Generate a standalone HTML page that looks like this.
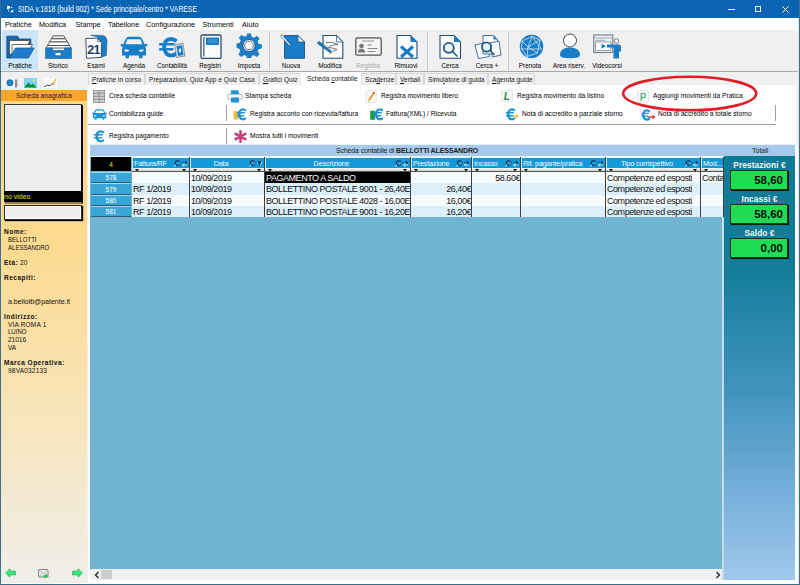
<!DOCTYPE html>
<html><head><meta charset="utf-8">
<style>
*{margin:0;padding:0;box-sizing:border-box}
html,body{width:800px;height:585px;overflow:hidden;background:#f0f0f0;font-family:"Liberation Sans",sans-serif;color:#222}
.a{position:absolute}
.t{position:absolute;white-space:nowrap;line-height:1}
#title{left:0;top:0;width:800px;height:18px;background:#0b63b4}
#menu{left:0;top:18px;width:800px;height:12px;background:#fff}
#tb{left:1px;top:30px;width:797px;height:41px;background:#f0f0f0}
#tbline{left:1px;top:71px;width:797px;height:1px;background:#a9a9a9}
.lbl{position:absolute;top:62px;font-size:7.5px;color:#000;white-space:nowrap;transform:translateX(-50%) scaleX(0.85);line-height:1}
.vsep{position:absolute;width:1px;background:#c5c5c5}
#left{left:1px;top:72px;width:86px;height:511px;background:linear-gradient(#fdd88a 0px,#fdd98c 150px,#f9e2b0 310px,#f4e9d0 420px,#efeeea 511px)}
#lefttop{left:1px;top:72px;width:86px;height:18px;background:#f0f0f0}
#orange{left:1px;top:90px;width:86px;height:11px;background:#fca52b}
.lt{position:absolute;left:4px;font-size:6.5px;color:#111;white-space:nowrap;line-height:1;transform-origin:0 0}
.lt b{font-weight:bold;letter-spacing:0.5px}
.lu{transform:scaleX(0.93)}
#tabs{left:88px;top:72px;width:710px;height:13px;background:#f0f0f0}
.tab{position:absolute;top:73px;height:12px;background:#f0f0f0;border:1px solid #d9d9d9;border-bottom:none;font-size:7.5px;color:#1a1a1a;white-space:nowrap;line-height:11px;padding-left:3px}
.tt{display:inline-block;transform-origin:0 50%;transform:scaleX(0.88)}
#btnarea{left:88px;top:85px;width:708px;height:60px;background:#fff}
.bt{position:absolute;font-size:8px;color:#000;white-space:nowrap;line-height:1;transform-origin:0 0;transform:scaleX(0.83)}
.hsep{position:absolute;height:1px;background:#a0a0a0}
#band{left:89px;top:145px;width:707px;height:11px;background:#a9c9ec}
#grid{left:90px;top:156px;width:633px;height:413px;background:#70b4d2}
#tot{left:724px;top:156px;width:71px;height:424px;background:linear-gradient(#0f7a95 0px,#127d99 110px,#3f92bb 230px,#76b0da 340px,#a0c8ec 424px)}
.gbox{position:absolute;left:730px;width:58px;height:20px;background:#20dc54;border:1px solid #0d3a1a;box-shadow:1px 1px 0.5px #041a0a}
.gv{position:absolute;right:4px;top:4px;font-size:11.5px;font-weight:bold;color:#0a0a0a;line-height:1}
.glbl{position:absolute;left:724px;width:71px;text-align:center;font-size:8.4px;font-weight:bold;color:#f6f6f6;line-height:1;letter-spacing:0.05px}
.hd{position:absolute;top:157px;height:11px;background:#1499d8;color:#fff;font-size:7px;line-height:10px;white-space:nowrap;overflow:hidden;border-left:1px solid #c8ecfa;border-top:1px solid #e6f7fd}
.flt{position:absolute;top:168px;height:4px;background:linear-gradient(#fafafa,#d0d0d0);border-bottom:1px solid #555}
.cell{position:absolute;height:11px;font-size:9px;letter-spacing:-0.45px;line-height:11px;white-space:nowrap;overflow:hidden;color:#111}
.rh{position:absolute;left:91px;width:40px;height:11px;background:#38a6d6;color:#fff;font-size:6.5px;line-height:11px;text-align:center;border-top:1px solid #9fd6ee;border-bottom:1px solid #2c5b70}
</style></head><body>
<!-- window borders -->


<div id="title" class="a">
  <svg class="a" style="left:7px;top:6px" width="7" height="7" viewBox="0 0 7 7"><path d="M0 0H3.2V1.5L1.6 3.2H0z" fill="#fff"/><path d="M6.2 3.2V6.2H3z" fill="#fff"/><circle cx="4.6" cy="1.5" r=".7" fill="#cfefff"/><circle cx="1.6" cy="4.8" r=".7" fill="#cfefff"/></svg>
  <div class="t" style="left:18px;top:5px;font-size:8.5px;color:#fff;transform-origin:0 0;transform:scaleX(0.8)">SIDA v.1818 (build 902) * Sede principale/centro * VARESE</div>
  <div class="a" style="left:728px;top:9px;width:7px;height:1px;background:#fff"></div>
  <div class="a" style="left:755px;top:6px;width:6px;height:6px;border:1px solid #fff"></div>
  <svg class="a" style="left:782px;top:6px" width="7" height="7" viewBox="0 0 7 7"><path d="M0.5 0.5L6.5 6.5M6.5 0.5L0.5 6.5" stroke="#fff" stroke-width="1"/></svg>
</div>

<div id="menu" class="a">
  <div class="t" style="left:5px;top:3px;font-size:7.3px;color:#000">Pratiche</div>
  <div class="t" style="left:39px;top:3px;font-size:7.3px;color:#000">Modifica</div>
  <div class="t" style="left:75.5px;top:3px;font-size:7.3px;color:#000">Stampe</div>
  <div class="t" style="left:108px;top:3px;font-size:7.3px;color:#000">Tabellone</div>
  <div class="t" style="left:146px;top:3px;font-size:7.3px;color:#000">Configurazione</div>
  <div class="t" style="left:202.5px;top:3px;font-size:7.3px;color:#000">Strumenti</div>
  <div class="t" style="left:242px;top:3px;font-size:7.3px;color:#000">Aiuto</div>
</div>

<div id="tb" class="a"></div>
<div class="a" style="left:2px;top:30px;width:36px;height:40px;background:#cce4f7"></div>
<div id="tbline" class="a"></div>
<div class="vsep" style="left:269px;top:32px;height:38px"></div>
<div class="vsep" style="left:427px;top:32px;height:38px"></div>
<div class="vsep" style="left:508px;top:32px;height:38px"></div>
<div class="lbl" style="left:20px">Pratiche</div>
<div class="lbl" style="left:57.5px">Storico</div>
<div class="lbl" style="left:96px">Esami</div>
<div class="lbl" style="left:134px">Agenda</div>
<div class="lbl" style="left:172px">Contabilità</div>
<div class="lbl" style="left:210px">Registri</div>
<div class="lbl" style="left:248.5px">Imposta</div>
<div class="lbl" style="left:291px">Nuova</div>
<div class="lbl" style="left:329.5px">Modifica</div>
<div class="lbl" style="left:368px;color:#a8a8a8">Registra</div>
<div class="lbl" style="left:406px">Rimuovi</div>
<div class="lbl" style="left:450px">Cerca</div>
<div class="lbl" style="left:487px">Cerca +</div>
<div class="lbl" style="left:530px">Prenota</div>
<div class="lbl" style="left:569px">Area riserv.</div>
<div class="lbl" style="left:607px">Videocorsi</div>


<!--ICONS-->
<svg class="a" style="left:6px;top:35px" width="29" height="24" viewBox="0 0 29 24">
 <path d="M0.8 1.2H11.5L13.5 4H24.8V11L4 23H0.8z" fill="#1766ab" stroke="#124f86" stroke-width=".8"/>
 <path d="M3.5 5.5H24L21 11.5L3.5 20z" fill="#fff" stroke="#333" stroke-width=".7"/>
 <path d="M6 9.5H26.5L23.5 14.5L6 21z" fill="#fff" stroke="#333" stroke-width=".7"/>
 <path d="M3.8 23L9.5 13H28.2L22.5 23z" fill="#1c7ccb" stroke="#135d9c" stroke-width=".8"/>
</svg>
<svg class="a" style="left:45px;top:35px" width="27" height="24" viewBox="0 0 27 24">
 <path d="M8 0.8h11l1.5 3H6.5z" fill="none" stroke="#3a3a3a" stroke-width=".8"/>
 <path d="M6.5 3.8h14l2 3.2h-18z" fill="#fff" stroke="#3a3a3a" stroke-width=".8"/>
 <path d="M4.5 7h18l2 3.5h-22z" fill="#fff" stroke="#3a3a3a" stroke-width=".8"/>
 <path d="M2.5 10.5h22L26 13H1z" fill="#fff" stroke="#3a3a3a" stroke-width=".8"/>
 <path d="M0.5 13H7.5V15.5H19.5V13H26.5V23.5H0.5z" fill="#1a7dc8" stroke="#1a5f99" stroke-width=".6"/>
 <rect x="10.5" y="18" width="5" height="2.2" fill="#fff"/>
</svg>
<svg class="a" style="left:85px;top:34px" width="23" height="25" viewBox="0 0 23 25">
 <path d="M6 1.2L17.5 1.5Q21.5 2 22 6.5L21.3 21.5L15 23.5L13 3z" fill="#1a7dc8" stroke="#135d9c" stroke-width=".6"/>
 <path d="M0.8 4.5L12.5 4.2L16.8 8.3L16.3 23.3L1.5 24.3z" fill="#fbfcfe" stroke="#2a3f5a" stroke-width=".9"/>
 <path d="M12.5 4.2L12.7 7.5L16 7.7" fill="none" stroke="#2a3f5a" stroke-width=".7"/>
 <text x="8.6" y="20.3" font-family="Liberation Sans" font-weight="bold" font-size="12.5" fill="#1f3d66" text-anchor="middle" letter-spacing="-0.5">21</text>
</svg>
<svg class="a" style="left:120px;top:36px" width="28" height="23" viewBox="0 0 28 23">
 <path d="M6 2.5Q7 0.8 9 0.8H19Q21 0.8 22 2.5L24.5 8H26.5Q27.5 8 27.5 9.2Q27.5 10.3 26 10.5L25 10.6Q26 12 26 14V19.5H22.5V22.3H19V19.5H9V22.3H5.5V19.5H2V14Q2 12 3 10.6L2 10.5Q0.5 10.3 0.5 9.2Q0.5 8 1.5 8H3.5z" fill="#1a7dc8"/>
 <path d="M7.5 3.2H20.5L22.5 8.3H5.5z" fill="#f0f0f0"/>
 <path d="M4.5 13.2L9 14L8.5 15.5H5z M23.5 13.2L19 14L19.5 15.5H23z" fill="#fff"/>
</svg>
<svg class="a" style="left:158px;top:36px" width="28" height="23" viewBox="0 0 28 23">
 <path d="M19.5 3.5Q17 1 13 1Q7 1 4.8 7H1.5L0.8 9.5H4.3V12H1.5L0.8 14.5H4.8Q7 21.5 13 21.5Q17 21.5 19.5 19L17.5 15.8Q15.5 17.5 13 17.5Q10 17.5 8.8 14.5H15L15.7 12H8.3V9.5H16L16.7 7H8.8Q10 5 13 5Q15.5 5 17.5 6.7z" fill="#1a7dc8"/>
 <path d="M16.5 8.5L25 7.5L27 20L18.5 21.5z" fill="#cfe3f3" stroke="#555" stroke-width=".6"/>
 <path d="M18.5 10L24 9.3L25.5 19L20 20z" fill="#1a7dc8"/>
 <ellipse cx="22" cy="14.5" rx="1.3" ry="2.2" fill="#cfe3f3"/>
</svg>
<svg class="a" style="left:200px;top:34px" width="22" height="25" viewBox="0 0 22 25">
 <rect x="1" y="1" width="20" height="23.5" rx="1.5" fill="#fbfbfb" stroke="#2c4a6e" stroke-width="1.3"/>
 <rect x="3.2" y="3" width="1.3" height="19.5" fill="#4a5a6a"/>
 <rect x="6" y="3.5" width="13" height="7.5" fill="#1a7dc8"/>
 <path d="M8 6h9M8 8h9" stroke="#6cb4e6" stroke-width=".7"/>
</svg>
<svg class="a" style="left:236px;top:33px" width="26" height="25" viewBox="0 0 26 25">
 <path d="M11 0.5h4l.7 3.3 2.2 .9 2.9-1.9 2.8 2.8-1.9 2.9 .9 2.2 3.3.7v4l-3.3.7-.9 2.2 1.9 2.9-2.8 2.8-2.9-1.9-2.2.9-.7 3.3h-4l-.7-3.3-2.2-.9-2.9 1.9-2.8-2.8 1.9-2.9-.9-2.2L.5 14.5v-4l3.3-.7.9-2.2L2.8 4.7 5.6 1.9l2.9 1.9 2.2-.9z" fill="#1a7dc8"/>
 <circle cx="13" cy="12.5" r="6" fill="#fff" stroke="#2a4a6a" stroke-width=".8"/>
 <circle cx="13" cy="12.5" r="4.3" fill="none" stroke="#2a4a6a" stroke-width=".8"/>
</svg>
<svg class="a" style="left:279px;top:34px" width="27" height="25" viewBox="0 0 27 25">
 <path d="M5.5 1.5H19L25.5 8V24.3H5.5z" fill="#1a7dc8" stroke="#1b4f80" stroke-width=".9"/>
 <path d="M19 1.5V8H25.5z" fill="#f4f8fc" stroke="#1b4f80" stroke-width=".7"/>
 <path d="M2 1.5L3.2 .8L11.5 10.5L11.8 12.3L10.2 11.5L1.8 2.5z" fill="#e8f2fa" stroke="#24466a" stroke-width=".6"/>
</svg>
<svg class="a" style="left:317px;top:34px" width="27" height="25" viewBox="0 0 27 25">
 <path d="M6 1.5H19.5L25.8 8V24.3H6z" fill="#fbfbfb" stroke="#1f4e79" stroke-width="1.1"/>
 <path d="M19.5 1.5V8H25.8z" fill="#fbfbfb" stroke="#1f4e79" stroke-width=".7"/>
 <path d="M9 8.5Q15 7 21 10.5Q13 11 11.5 13.5Q17 14 20 15.5Q14 17.5 13 20" fill="none" stroke="#2a3a4a" stroke-width=".7"/>
 <path d="M0.8 8.3L2.3 7.5L13.8 16.5L14.2 18.5L12.2 18L0.6 9.6z" fill="#1a7dc8" stroke="#1b4f80" stroke-width=".6"/>
</svg>
<svg class="a" style="left:355px;top:37px" width="27" height="19" viewBox="0 0 27 19">
 <rect x="0.8" y="0.8" width="25.4" height="17.4" rx="1.5" fill="#f4f4f4" stroke="#555" stroke-width="1.3"/>
 <path d="M7 4h12" stroke="#777" stroke-width=".8"/>
 <circle cx="6.5" cy="9" r="2.3" fill="#777"/>
 <path d="M2.8 15.5Q3 11.8 6.5 11.8Q10 11.8 10.2 15.5z" fill="#777"/>
 <path d="M12.5 8h4M12.5 11.5h10M12.5 14.5h8" stroke="#888" stroke-width="1"/>
</svg>
<svg class="a" style="left:396px;top:34px" width="22" height="25" viewBox="0 0 22 25">
 <path d="M1 1.5H14.5L21 8V24.3H1z" fill="#fbfbfb" stroke="#1f4e79" stroke-width="1.1"/>
 <path d="M14.5 1.5V8H21z" fill="#1a7dc8"/>
 <path d="M5 12.5L17 23M17 12.5L5 23" stroke="#1a7dc8" stroke-width="3"/>
</svg>
<svg class="a" style="left:439px;top:34px" width="23" height="25" viewBox="0 0 23 25">
 <path d="M1 1.5H15L21.5 8V24.3H1z" fill="#fbfbfb" stroke="#1f4e79" stroke-width="1.1"/>
 <path d="M15 1.5V8H21.5z" fill="#1a7dc8"/>
 <circle cx="9.8" cy="13.8" r="5" fill="#eaf5fc" stroke="#1f5a8a" stroke-width="1.8"/>
 <path d="M13.5 17.5L18.5 22.5" stroke="#1f5a8a" stroke-width="1.6"/>
</svg>
<svg class="a" style="left:474px;top:34px" width="28" height="25" viewBox="0 0 28 25">
 <path d="M1 11L12 8.5L15.5 22.5L4.5 24.5z" fill="#fbfbfb" stroke="#1f4e79" stroke-width=".8"/>
 <path d="M9 1.5H19.5L23.5 5.5V20H9z" fill="#fbfbfb" stroke="#1f4e79" stroke-width=".8"/>
 <path d="M19.5 1.5V5.5H23.5z" fill="#1a7dc8"/>
 <path d="M16 9L25 7L27 21L18.5 23z" fill="#fbfbfb" stroke="#1f4e79" stroke-width=".8"/>
 <circle cx="12.5" cy="13" r="4.6" fill="#eaf5fc" stroke="#1f5a8a" stroke-width="1.8"/>
 <path d="M15.8 16.3L20.5 21" stroke="#1f5a8a" stroke-width="1.6"/>
</svg>
<svg class="a" style="left:519px;top:34px" width="25" height="25" viewBox="0 0 25 25">
 <circle cx="12.5" cy="12.5" r="11.8" fill="#1a7dc8"/>
 <path d="M3 7L13 2.5L21 6L18.5 19L8 22.5L2.5 15z M13 2.5L9 13L18.5 19 M9 13L3 7 M9 13L8 22.5 M21 6L9 13 M13 2.5L22.5 15 M2.5 15L22.5 15" fill="none" stroke="#e8f3fb" stroke-width=".7"/>
</svg>
<svg class="a" style="left:559px;top:33px" width="22" height="26" viewBox="0 0 22 26">
 <circle cx="11" cy="7.5" r="6.5" fill="#fff" stroke="#444" stroke-width="1"/>
 <path d="M1 22Q1 14.5 11 14.5Q21 14.5 21 22Q21 25.3 11 25.3Q1 25.3 1 22z" fill="#1a7dc8"/>
</svg>
<svg class="a" style="left:593px;top:34px" width="29" height="25" viewBox="0 0 29 25">
 <rect x="0.8" y="1" width="19" height="17.5" fill="#f4f4f4" stroke="#6a7a88" stroke-width="1.1"/>
 <path d="M0.8 4h19M2.5 6.3h10" stroke="#8a9aa8" stroke-width=".9"/>
 <rect x="2.5" y="8" width="15.5" height="8.5" fill="#fff" stroke="#6a7a88" stroke-width=".7"/>
 <path d="M8.5 9.8L13 12.3L8.5 14.8z" fill="#1a7dc8"/>
 <circle cx="23.5" cy="7" r="2.3" fill="#fff" stroke="#555" stroke-width=".8"/>
 <path d="M14 10.5H26Q28 10.5 28 13V17.5H26V24.5H20.5V13.5H14z" fill="#1a7dc8"/>
</svg>
<!--/ICONS-->

<!-- left panel -->
<div id="left" class="a"></div>
<div id="lefttop" class="a"></div>
<div id="orange" class="a"><div class="t" style="left:15px;top:2px;font-size:7.5px;color:#2a2000;transform-origin:0 0;transform:scaleX(0.89)">Scheda anagrafica</div></div>


<!--LEFT-->
<svg class="a" style="left:4px;top:78px" width="15" height="10" viewBox="0 0 15 10"><rect x="0.5" y="0.5" width="13.5" height="9" fill="#f6f6f6"/><circle cx="6" cy="4.8" r="3.2" fill="#2384cc" stroke="#0e5a99" stroke-width=".5"/><rect x="11" y="1.5" width="2.3" height="8" fill="#8c8c8c"/></svg>
<svg class="a" style="left:24px;top:78px" width="13" height="10" viewBox="0 0 13 10"><rect x="0" y="0" width="13" height="10" fill="#7fd6f2"/><path d="M0 9.5L4.5 4.5L7 7L8.8 5.5L12.8 9.5z" fill="#0b8e3e"/><circle cx="10" cy="2.6" r="1.1" fill="#e8e29a"/></svg>
<svg class="a" style="left:43px;top:78px" width="14" height="10" viewBox="0 0 14 10"><rect x="0" y="0" width="14" height="10" fill="#fbfbfb"/><path d="M1 8.8L4.5 7.2L7 7.8L9 5.6L10.8 6.5" fill="none" stroke="#333" stroke-width=".9"/><path d="M9.5 6.5L11.5 3.5L13 1" fill="none" stroke="#f0a020" stroke-width="1.2"/></svg>
<div class="a" style="left:4px;top:104px;width:78px;height:87px;background:#efefef;border:1px solid #3a3a3a;border-right:none;border-bottom:none"></div>
<div class="a" style="left:81px;top:105px;width:2px;height:98px;background:#0a0a0a"></div>
<div class="a" style="left:4px;top:191px;width:78px;height:11px;background:#000"></div>
<div class="t" style="left:4px;top:193px;font-size:7px;color:#e2e23c">no video</div>
<div class="a" style="left:5px;top:202px;width:78px;height:2px;background:#2a2010;opacity:.5"></div>
<div class="a" style="left:4px;top:205px;width:78px;height:15px;background:#efefef;border:1px solid #2a2a2a;box-shadow:inset 1px 1px 0 #fff,inset -1px -1px 0 #fff,1px 1px 1px #000"></div>
<div class="lt" style="top:229px"><b>Nome:</b></div>
<div class="lt" style="top:236.5px;left:8px" ><span class="lu" style="display:inline-block;transform-origin:0 0">BELLOTTI</span></div>
<div class="lt" style="top:244.5px;left:8px" ><span class="lu" style="display:inline-block;transform-origin:0 0">ALESSANDRO</span></div>
<div class="lt" style="top:259.5px"><b>Età:</b> 20</div>
<div class="lt" style="top:275px"><b>Recapiti:</b></div>
<div class="lt" style="top:298px;left:8px;font-size:7px">a.bellotti@patente.it</div>
<div class="lt" style="top:314px"><b>Indirizzo:</b></div>
<div class="lt" style="top:321.5px;left:8px" ><span style="letter-spacing:0.2px">VIA ROMA 1</span></div>
<div class="lt" style="top:329px;left:8px" ><span class="lu" style="display:inline-block;transform-origin:0 0">LUINO</span></div>
<div class="lt" style="top:337px;left:8px">21016</div>
<div class="lt" style="top:344.5px;left:8px">VA</div>
<div class="lt" style="top:360px"><b>Marca Operativa:</b></div>
<div class="lt" style="top:368px;left:8px" ><span style="letter-spacing:0.2px">98VA032133</span></div>
<svg class="a" style="left:5px;top:568px" width="11" height="10" viewBox="0 0 11 10"><path d="M0.5 5L5 0.8V3h5.5v4H5v2.2z" fill="#3de07a" stroke="#22b055" stroke-width=".6"/></svg>
<svg class="a" style="left:38px;top:569px" width="11" height="10" viewBox="0 0 11 10"><rect x="0.5" y="0.5" width="9.5" height="7.5" rx=".8" fill="#ececf2" stroke="#7a7a7a" stroke-width=".9"/><path d="M0.8 0.8L5.2 4.8L9.8 0.8M0.8 7.8L4 4.5M9.8 7.8L6.5 4.5" fill="none" stroke="#8a8a8a" stroke-width=".6"/><path d="M5 6.2h2.5V4.5l3 2.6-3 2.6V8H5z" fill="#2fc45a"/></svg>
<svg class="a" style="left:72px;top:568px" width="11" height="10" viewBox="0 0 11 10"><path d="M10.5 5L6 0.8V3H0.5v4H6v2.2z" fill="#3de07a" stroke="#22b055" stroke-width=".6"/></svg>

<!--/LEFT-->

<!-- tabs -->
<div id="tabs" class="a"></div>
<div class="tab" style="left:88px;width:57px"><span class="tt"><u>P</u>ratiche in corso</span></div>
<div class="tab" style="left:145px;width:114px"><span class="tt">Preparazioni, Quiz App e Quiz Casa</span></div>
<div class="tab" style="left:259px;width:43px"><span class="tt"><u>G</u>rafici Quiz</span></div>
<div class="tab" style="left:301px;top:72px;height:13px;width:60px;background:#fff;padding-left:6px;border:none;line-height:13px"><span class="tt">Scheda <u>c</u>ontabile</span></div>
<div class="tab" style="left:361px;width:35px"><span class="tt">Sca<u>d</u>enze</span></div>
<div class="tab" style="left:396px;width:28px"><span class="tt"><u>V</u>erbali</span></div>
<div class="tab" style="left:424px;width:64px"><span class="tt">Simu<u>l</u>atore di guida</span></div>
<div class="tab" style="left:488px;width:47px"><span class="tt"><u>A</u>genda guide</span></div>

<div id="btnarea" class="a"></div>
<div class="a" style="left:796px;top:85px;width:2px;height:498px;background:#f0f0f0"></div>
<div class="hsep" style="left:88px;top:124px;width:688px"></div>
<div class="a" style="left:88px;top:144px;width:708px;height:1px;background:#e8f4fb"></div>
<div class="vsep" style="left:226px;top:105px;height:16px;background:#a0a0a0"></div>
<div class="vsep" style="left:226px;top:128px;height:16px;background:#a0a0a0"></div>
<div class="vsep" style="left:775px;top:105px;height:16px;background:#a0a0a0"></div>

<div class="bt" style="left:108.5px;top:92px">Crea scheda contabile</div>
<div class="bt" style="left:108.5px;top:110px">Contabilizza guide</div>
<div class="bt" style="left:108.5px;top:132px">Registra pagamento</div>
<div class="bt" style="left:244.5px;top:92px">Stampa scheda</div>
<div class="bt" style="left:249.5px;top:110px">Registra acconto con ricevuta/fattura</div>
<div class="bt" style="left:249.5px;top:132px">Mostra tutti i movimenti</div>
<div class="bt" style="left:381px;top:92px">Registra movimento libero</div>
<div class="bt" style="left:385.5px;top:110px">Fattura(XML) / Ricevuta</div>
<div class="bt" style="left:516.5px;top:92px">Registra movimento da listino</div>
<div class="bt" style="left:521.5px;top:110px">Nota di accredito a parziale storno</div>
<div class="bt" style="left:652.5px;top:92px">Aggiungi movimenti da Pratica</div>
<div class="bt" style="left:657.5px;top:110px">Nota di accredito a totale storno</div>


<!--BTNICONS-->
<svg class="a" style="left:93px;top:90px" width="12" height="13" viewBox="0 0 12 13">
 <rect x=".4" y=".4" width="11.2" height="12" fill="#cfcfcf" stroke="#8a8a8a" stroke-width=".8"/>
 <path d="M0 3.2H12M0 6.3H12M0 9.4H12M6 0V12.5" stroke="#8a8a8a" stroke-width=".9"/>
</svg>
<svg class="a" style="left:92px;top:109px" width="15" height="11" viewBox="0 0 15 11">
 <path d="M3 1.2Q3.5 0.3 4.5 0.3H10.5Q11.5 0.3 12 1.2L13.2 3.8H14.3Q15 3.8 15 4.5Q15 5.1 14 5.2L13.6 5.3Q14.2 6 14.2 7V9.2H12.3V10.8H10.3V9.2H4.7V10.8H2.7V9.2H0.8V7Q0.8 6 1.4 5.3L1 5.2Q0 5.1 0 4.5Q0 3.8 .7 3.8H1.8z" fill="#1e93d6"/>
 <path d="M4 1.5H11L12 3.9H3z" fill="#e9f4fb"/>
 <path d="M2 6.3L4.5 6.8L4.2 7.6H2.3z M13 6.3L10.5 6.8L10.8 7.6H12.7z" fill="#fff"/>
</svg>
<svg class="a" style="left:93px;top:130px" width="12" height="13" viewBox="0 0 12 13">
 <path d="M11.5 2Q10 .3 7.8 .3Q4 .3 2.8 4H1L.6 5.5H2.5V7H1L.6 8.5H2.8Q4 12.5 7.8 12.5Q10 12.5 11.5 10.8L10.3 9Q9.2 10.2 7.8 10.2Q6 10.2 5.3 8.5H9L9.4 7H5.1V5.5H9.7L10.1 4H5.3Q6 2.6 7.8 2.6Q9.2 2.6 10.3 3.6z" fill="#1e93d6"/>
</svg>
<svg class="a" style="left:227px;top:90px" width="16" height="13" viewBox="0 0 16 13">
 <path d="M4 .3H10.5L12 1.8V4.5H4z" fill="#1e93d6"/>
 <rect x=".8" y="4.3" width="14.4" height="5" rx="1" fill="#f6f6f6" stroke="#9aa5ad" stroke-width=".7"/>
 <rect x="4" y="7.5" width="8" height="5" fill="#1e93d6"/>
</svg>
<svg class="a" style="left:233px;top:108px" width="14" height="13" viewBox="0 0 14 13">
 <rect x=".5" y="3" width="5" height="8.5" fill="#f2c040"/>
 <path d="M13.5 2Q12 .3 10 .3Q6.5 .3 5.3 4H4L3.6 5.5H5V7H4L3.6 8.5H5.3Q6.5 12.5 10 12.5Q12 12.5 13.5 10.8L12.3 9Q11.3 10.2 10 10.2Q8.3 10.2 7.7 8.5H11L11.4 7H7.5V5.5H11.7L12.1 4H7.7Q8.3 2.6 10 2.6Q11.3 2.6 12.3 3.6z" fill="#1e93d6"/>
</svg>
<svg class="a" style="left:234px;top:130px" width="13" height="13" viewBox="0 0 13 13">
 <g stroke="#c9407c" stroke-width="2.6" stroke-linecap="round"><path d="M6.5 1.2V11.8M1.6 3.8L11.4 9.2M1.6 9.2L11.4 3.8"/></g>
</svg>
<svg class="a" style="left:365px;top:90px" width="12" height="13" viewBox="0 0 12 13">
 <rect x=".8" y=".5" width="10.5" height="12" rx="1" fill="#fafafa" stroke="#dcdcdc" stroke-width=".7"/>
 <path d="M8.6 1.8L10 2.8L5 10.5L3.2 11.5L3.3 9.5z" fill="#f0a030"/>
 <path d="M8.6 1.8L10 2.8L9.3 3.9L7.9 2.9z" fill="#c03030"/>
</svg>
<svg class="a" style="left:370px;top:108px" width="14" height="13" viewBox="0 0 14 13">
 <rect x=".2" y="2.8" width="5" height="9" fill="#1aa050"/>
 <path d="M13.5 2Q12 .3 10 .3Q6.5 .3 5.3 4H4L3.6 5.5H5V7H4L3.6 8.5H5.3Q6.5 12.5 10 12.5Q12 12.5 13.5 10.8L12.3 9Q11.3 10.2 10 10.2Q8.3 10.2 7.7 8.5H11L11.4 7H7.5V5.5H11.7L12.1 4H7.7Q8.3 2.6 10 2.6Q11.3 2.6 12.3 3.6z" fill="#1e93d6"/>
</svg>
<svg class="a" style="left:501px;top:90px" width="12" height="12" viewBox="0 0 12 12">
 <rect x=".5" y=".5" width="11" height="11" rx="1" fill="#fafafa" stroke="#dcdcdc" stroke-width=".7"/>
 <text x="5.8" y="9.8" font-family="Liberation Sans" font-weight="bold" font-style="italic" font-size="10" fill="#1a9040" text-anchor="middle">L</text>
</svg>
<svg class="a" style="left:505px;top:108px" width="14" height="13" viewBox="0 0 14 13">
 <path d="M10.5 2Q9 .3 7 .3Q3.5 .3 2.3 4H1L.6 5.5H2V7H1L.6 8.5H2.3Q3.5 12.5 7 12.5Q9 12.5 10.5 10.8L9.3 9Q8.3 10.2 7 10.2Q5.3 10.2 4.7 8.5H8L8.4 7H4.5V5.5H8.7L9.1 4H4.7Q5.3 2.6 7 2.6Q8.3 2.6 9.3 3.6z" fill="#1e93d6"/>
 <path d="M8 7.5H11V5.5L13.8 8.3L11 11V9H8z" fill="#f2c84a"/>
</svg>
<svg class="a" style="left:637px;top:90px" width="12" height="13" viewBox="0 0 12 13">
 <rect x=".5" y=".5" width="11" height="12" rx="1" fill="#fafafa" stroke="#dcdcdc" stroke-width=".7"/>
 <text x="6" y="10.5" font-family="Liberation Sans" font-size="10" fill="#20a060" text-anchor="middle">P</text>
</svg>
<svg class="a" style="left:641px;top:109px" width="15" height="12" viewBox="0 0 15 12">
 <path d="M9.5 1.8Q8 .2 6 .2Q2.5 .2 1.3 3.7H.5V5H1.1V6.5H.5V7.8H1.3Q2.5 11.8 6 11.8Q8 11.8 9.5 10.2L8.3 8.5Q7.3 9.6 6 9.6Q4.3 9.6 3.7 7.8H7L7.4 6.5H3.5V5H7.7L8.1 3.7H3.7Q4.3 2.4 6 2.4Q7.3 2.4 8.3 3.4z" fill="#1e93d6"/>
 <path d="M6.5 7.2H11.5V5.5L14.5 8L11.5 10.5V8.8H6.5z" fill="#e03848"/>
</svg>
<svg class="a" style="left:620px;top:74px" width="140" height="40" viewBox="0 0 140 40">
 <ellipse cx="69.7" cy="19.5" rx="66.5" ry="16.8" fill="none" stroke="#e01e28" stroke-width="2.6"/>
</svg>
<!--/BTNICONS-->

<div id="band" class="a">
  <div class="t" style="left:247px;top:2px;font-size:7px;letter-spacing:-0.15px">Scheda contabile di <b>BELLOTTI ALESSANDRO</b></div>
  <div class="t" style="left:663px;top:2px;font-size:7px">Totali</div>
</div>
<div id="grid" class="a"></div>
<div id="tot" class="a"></div>
<div class="a" style="left:722px;top:156px;width:2px;height:424px;background:#c9dbe6"></div>
<div class="a" style="left:90px;top:569px;width:632px;height:11px;background:#f0f0f0"></div>
<div class="a" style="left:88px;top:580px;width:710px;height:3px;background:#fff"></div>
<div class="a" style="left:88px;top:145px;width:2px;height:438px;background:#fff"></div>
<div class="a" style="left:795px;top:145px;width:3px;height:438px;background:#fff"></div>

<!--GRID-->
<div class="a" style="left:90px;top:156px;width:634px;height:1px;background:#eaf6fb"></div>
<div class="a" style="left:91px;top:157px;width:40px;height:14px;background:#000"><div class="t" style="left:0;width:40px;text-align:center;top:4px;font-size:7px;color:#d6e23a">4</div></div>
<div class="a" style="left:132px;top:172px;width:591px;height:11px;background:#f6fbfe"></div>
<div class="rh" style="top:172px;height:11px;line-height:10px">578</div>
<div class="a" style="left:132px;top:183px;width:591px;height:12px;background:#dcf0fb"></div>
<div class="rh" style="top:183px;height:12px;line-height:11px">579</div>
<div class="a" style="left:132px;top:195px;width:591px;height:11px;background:#f6fbfe"></div>
<div class="rh" style="top:195px;height:11px;line-height:10px">580</div>
<div class="a" style="left:132px;top:206px;width:591px;height:11px;background:#dcf0fb"></div>
<div class="rh" style="top:206px;height:11px;line-height:10px">581</div>
<div class="hd" style="left:132px;width:57px"><div class="t" style="left:1px;top:1.5px;font-size:7.2px;letter-spacing:-0.15px;color:#f4fbff">Fattura/RF</div><svg class="a" style="left:41px;top:1.5px" width="14" height="8" viewBox="0 0 14 8"><circle cx="3.6" cy="3" r="2.3" fill="none" stroke="#0b2a55" stroke-width="1.1"/><path d="M2.1 4.6L.5 6.4" stroke="#9be8ff" stroke-width="1.1"/><path d="M5.2 1.8Q6 3.5 4.5 5" fill="none" stroke="#9be8ff" stroke-width=".7"/><path d="M8.5 2.8h4.5M11 1l2 1.8-2 1.8" fill="none" stroke="#0b2a55" stroke-width=".9"/><path d="M13 4.9H8.5M10.5 3.2L8.5 4.9l2 1.8" fill="none" stroke="#bff0ff" stroke-width=".9"/></svg></div>
<div class="flt" style="left:132px;width:57px"><svg class="a" style="left:3px;top:1px" width="4" height="3"><path d="M0 0h4L2 2.5z" fill="#111"/></svg><svg class="a" style="left:50px;top:1px" width="4" height="3"><path d="M0 0h4L2 2.5z" fill="#111"/></svg></div>
<div class="a" style="left:189px;top:157px;width:1px;height:60px;background:#3c4043"></div>
<div class="hd" style="left:190px;width:74px"><div class="t" style="left:0;width:60px;text-align:center;top:1.5px;font-size:7.2px;letter-spacing:-0.15px;color:#f4fbff">Data</div><svg class="a" style="left:58px;top:1.5px" width="14" height="8" viewBox="0 0 14 8"><circle cx="3.6" cy="3" r="2.3" fill="none" stroke="#0b2a55" stroke-width="1.1"/><path d="M2.1 4.6L.5 6.4" stroke="#9be8ff" stroke-width="1.1"/><path d="M5.2 1.8Q6 3.5 4.5 5" fill="none" stroke="#9be8ff" stroke-width=".7"/><path d="M8.5 1.2h4.5L11.2 3.8V6.5L10.3 5.6V3.8z" fill="#0b2a55"/><path d="M13 1.2L11.2 6.5" stroke="#bff0ff" stroke-width=".8"/></svg></div>
<div class="flt" style="left:190px;width:74px"><svg class="a" style="left:3px;top:1px" width="4" height="3"><path d="M0 0h4L2 2.5z" fill="#111"/></svg><svg class="a" style="left:67px;top:1px" width="4" height="3"><path d="M0 0h4L2 2.5z" fill="#111"/></svg></div>
<div class="a" style="left:264px;top:157px;width:1px;height:60px;background:#3c4043"></div>
<div class="hd" style="left:265px;width:145px"><div class="t" style="left:0;width:131px;text-align:center;top:1.5px;font-size:7.2px;letter-spacing:-0.15px;color:#f4fbff">Descrizione</div><svg class="a" style="left:129px;top:1.5px" width="14" height="8" viewBox="0 0 14 8"><circle cx="3.6" cy="3" r="2.3" fill="none" stroke="#0b2a55" stroke-width="1.1"/><path d="M2.1 4.6L.5 6.4" stroke="#9be8ff" stroke-width="1.1"/><path d="M5.2 1.8Q6 3.5 4.5 5" fill="none" stroke="#9be8ff" stroke-width=".7"/><path d="M8.5 2.8h4.5M11 1l2 1.8-2 1.8" fill="none" stroke="#0b2a55" stroke-width=".9"/><path d="M13 4.9H8.5M10.5 3.2L8.5 4.9l2 1.8" fill="none" stroke="#bff0ff" stroke-width=".9"/></svg></div>
<div class="flt" style="left:265px;width:145px"><svg class="a" style="left:3px;top:1px" width="4" height="3"><path d="M0 0h4L2 2.5z" fill="#111"/></svg><svg class="a" style="left:138px;top:1px" width="4" height="3"><path d="M0 0h4L2 2.5z" fill="#111"/></svg></div>
<div class="a" style="left:410px;top:157px;width:1px;height:60px;background:#3c4043"></div>
<div class="hd" style="left:411px;width:60px"><div class="t" style="left:1px;top:1.5px;font-size:7.2px;letter-spacing:-0.15px;color:#f4fbff">Prestazione</div><svg class="a" style="left:44px;top:1.5px" width="14" height="8" viewBox="0 0 14 8"><circle cx="3.6" cy="3" r="2.3" fill="none" stroke="#0b2a55" stroke-width="1.1"/><path d="M2.1 4.6L.5 6.4" stroke="#9be8ff" stroke-width="1.1"/><path d="M5.2 1.8Q6 3.5 4.5 5" fill="none" stroke="#9be8ff" stroke-width=".7"/><path d="M8.5 2.8h4.5M11 1l2 1.8-2 1.8" fill="none" stroke="#0b2a55" stroke-width=".9"/><path d="M13 4.9H8.5M10.5 3.2L8.5 4.9l2 1.8" fill="none" stroke="#bff0ff" stroke-width=".9"/></svg></div>
<div class="flt" style="left:411px;width:60px"><svg class="a" style="left:3px;top:1px" width="4" height="3"><path d="M0 0h4L2 2.5z" fill="#111"/></svg><svg class="a" style="left:53px;top:1px" width="4" height="3"><path d="M0 0h4L2 2.5z" fill="#111"/></svg></div>
<div class="a" style="left:471px;top:157px;width:1px;height:60px;background:#3c4043"></div>
<div class="hd" style="left:472px;width:48px"><div class="t" style="left:1px;top:1.5px;font-size:7.2px;letter-spacing:-0.15px;color:#f4fbff">Incasso</div><svg class="a" style="left:32px;top:1.5px" width="14" height="8" viewBox="0 0 14 8"><circle cx="3.6" cy="3" r="2.3" fill="none" stroke="#0b2a55" stroke-width="1.1"/><path d="M2.1 4.6L.5 6.4" stroke="#9be8ff" stroke-width="1.1"/><path d="M5.2 1.8Q6 3.5 4.5 5" fill="none" stroke="#9be8ff" stroke-width=".7"/><path d="M8.5 2.8h4.5M11 1l2 1.8-2 1.8" fill="none" stroke="#0b2a55" stroke-width=".9"/><path d="M13 4.9H8.5M10.5 3.2L8.5 4.9l2 1.8" fill="none" stroke="#bff0ff" stroke-width=".9"/></svg></div>
<div class="flt" style="left:472px;width:48px"><svg class="a" style="left:3px;top:1px" width="4" height="3"><path d="M0 0h4L2 2.5z" fill="#111"/></svg><svg class="a" style="left:41px;top:1px" width="4" height="3"><path d="M0 0h4L2 2.5z" fill="#111"/></svg></div>
<div class="a" style="left:520px;top:157px;width:1px;height:60px;background:#3c4043"></div>
<div class="hd" style="left:521px;width:84px"><div class="t" style="left:1px;top:1.5px;font-size:7.2px;letter-spacing:-0.15px;color:#f4fbff">Rif. pagante/pratica</div><svg class="a" style="left:68px;top:1.5px" width="14" height="8" viewBox="0 0 14 8"><circle cx="3.6" cy="3" r="2.3" fill="none" stroke="#0b2a55" stroke-width="1.1"/><path d="M2.1 4.6L.5 6.4" stroke="#9be8ff" stroke-width="1.1"/><path d="M5.2 1.8Q6 3.5 4.5 5" fill="none" stroke="#9be8ff" stroke-width=".7"/><path d="M8.5 2.8h4.5M11 1l2 1.8-2 1.8" fill="none" stroke="#0b2a55" stroke-width=".9"/><path d="M13 4.9H8.5M10.5 3.2L8.5 4.9l2 1.8" fill="none" stroke="#bff0ff" stroke-width=".9"/></svg></div>
<div class="flt" style="left:521px;width:84px"><svg class="a" style="left:3px;top:1px" width="4" height="3"><path d="M0 0h4L2 2.5z" fill="#111"/></svg><svg class="a" style="left:77px;top:1px" width="4" height="3"><path d="M0 0h4L2 2.5z" fill="#111"/></svg></div>
<div class="a" style="left:605px;top:157px;width:1px;height:60px;background:#3c4043"></div>
<div class="hd" style="left:606px;width:94px"><div class="t" style="left:0;width:80px;text-align:center;top:1.5px;font-size:7.2px;letter-spacing:-0.15px;color:#f4fbff">Tipo corrispettivo</div><svg class="a" style="left:78px;top:1.5px" width="14" height="8" viewBox="0 0 14 8"><circle cx="3.6" cy="3" r="2.3" fill="none" stroke="#0b2a55" stroke-width="1.1"/><path d="M2.1 4.6L.5 6.4" stroke="#9be8ff" stroke-width="1.1"/><path d="M5.2 1.8Q6 3.5 4.5 5" fill="none" stroke="#9be8ff" stroke-width=".7"/><path d="M8.5 2.8h4.5M11 1l2 1.8-2 1.8" fill="none" stroke="#0b2a55" stroke-width=".9"/><path d="M13 4.9H8.5M10.5 3.2L8.5 4.9l2 1.8" fill="none" stroke="#bff0ff" stroke-width=".9"/></svg></div>
<div class="flt" style="left:606px;width:94px"><svg class="a" style="left:3px;top:1px" width="4" height="3"><path d="M0 0h4L2 2.5z" fill="#111"/></svg><svg class="a" style="left:87px;top:1px" width="4" height="3"><path d="M0 0h4L2 2.5z" fill="#111"/></svg></div>
<div class="a" style="left:700px;top:157px;width:1px;height:60px;background:#3c4043"></div>
<div class="hd" style="left:701px;width:22px"><div class="t" style="left:1px;top:1.5px;font-size:7.2px;letter-spacing:-0.15px;color:#f4fbff">Mod...</div></div>
<div class="flt" style="left:701px;width:22px"><svg class="a" style="left:3px;top:1px" width="4" height="3"><path d="M0 0h4L2 2.5z" fill="#111"/></svg></div>
<div class="a" style="left:723px;top:157px;width:1px;height:60px;background:#3c4043"></div>
<div class="cell" style="left:191px;top:172px;height:11px;line-height:12.5px;">10/09/2019</div>
<div class="a" style="left:265px;top:172px;width:145px;height:11px;background:#000"></div>
<div class="cell" style="left:266px;top:172px;height:11px;line-height:12.5px;color:#f4f4f4">PAGAMENTO A SALDO</div>
<div class="cell" style="left:474px;width:46px;top:172px;height:11px;line-height:12.5px;text-align:right;">58.60€</div>
<div class="cell" style="left:607px;top:172px;height:11px;line-height:12.5px;">Competenze ed esposti</div>
<div class="cell" style="left:702px;top:172px;height:11px;line-height:12.5px;width:21px">Conta</div>
<div class="cell" style="left:133px;top:183px;height:12px;line-height:13.5px;">RF 1/2019</div>
<div class="cell" style="left:191px;top:183px;height:12px;line-height:13.5px;">10/09/2019</div>
<div class="cell" style="left:266px;top:183px;height:12px;line-height:13.5px;">BOLLETTINO POSTALE 9001 - 26,40E</div>
<div class="cell" style="left:413px;width:58px;top:183px;height:12px;line-height:13.5px;text-align:right;">26,40€</div>
<div class="cell" style="left:607px;top:183px;height:12px;line-height:13.5px;">Competenze ed esposti</div>
<div class="cell" style="left:133px;top:195px;height:11px;line-height:12.5px;">RF 1/2019</div>
<div class="cell" style="left:191px;top:195px;height:11px;line-height:12.5px;">10/09/2019</div>
<div class="cell" style="left:266px;top:195px;height:11px;line-height:12.5px;">BOLLETTINO POSTALE 4028 - 16,00E</div>
<div class="cell" style="left:413px;width:58px;top:195px;height:11px;line-height:12.5px;text-align:right;">16,00€</div>
<div class="cell" style="left:607px;top:195px;height:11px;line-height:12.5px;">Competenze ed esposti</div>
<div class="cell" style="left:133px;top:206px;height:11px;line-height:12.5px;">RF 1/2019</div>
<div class="cell" style="left:191px;top:206px;height:11px;line-height:12.5px;">10/09/2019</div>
<div class="cell" style="left:266px;top:206px;height:11px;line-height:12.5px;">BOLLETTINO POSTALE 9001 - 16,20E</div>
<div class="cell" style="left:413px;width:58px;top:206px;height:11px;line-height:12.5px;text-align:right;">16,20€</div>
<div class="cell" style="left:607px;top:206px;height:11px;line-height:12.5px;">Competenze ed esposti</div>
<!--/GRID-->
<div class="glbl" style="top:161px">Prestazioni €</div>
<div class="gbox" style="top:170px"><div class="gv">58,60</div></div>
<div class="glbl" style="top:195px">Incassi €</div>
<div class="gbox" style="top:204px"><div class="gv">58,60</div></div>
<div class="glbl" style="top:229px">Saldo €</div>
<div class="gbox" style="top:238px"><div class="gv">0,00</div></div>


<div class="a" style="left:1px;top:583px;width:798px;height:1px;background:#fafafa"></div>
<div class="a" style="left:0;top:0;width:1px;height:585px;background:#3d6f8a"></div>
<div class="a" style="left:799px;top:0;width:1px;height:585px;background:#3d6f8a"></div>
<div class="a" style="left:0;top:584px;width:800px;height:1px;background:#3d6f8a"></div>
<div class="a" style="left:798px;top:18px;width:1px;height:566px;background:#e8e8e8"></div>
<svg class="a" style="left:94px;top:571px" width="6" height="8" viewBox="0 0 6 8"><path d="M4.5 1L1.5 4L4.5 7" fill="none" stroke="#222" stroke-width="1.3"/></svg>
<div class="a" style="left:101px;top:570px;width:11px;height:9px;background:#cdcdcd"></div>
<svg class="a" style="left:715px;top:571px" width="6" height="8" viewBox="0 0 6 8"><path d="M1.5 1L4.5 4L1.5 7" fill="none" stroke="#222" stroke-width="1.3"/></svg>
</body></html>
